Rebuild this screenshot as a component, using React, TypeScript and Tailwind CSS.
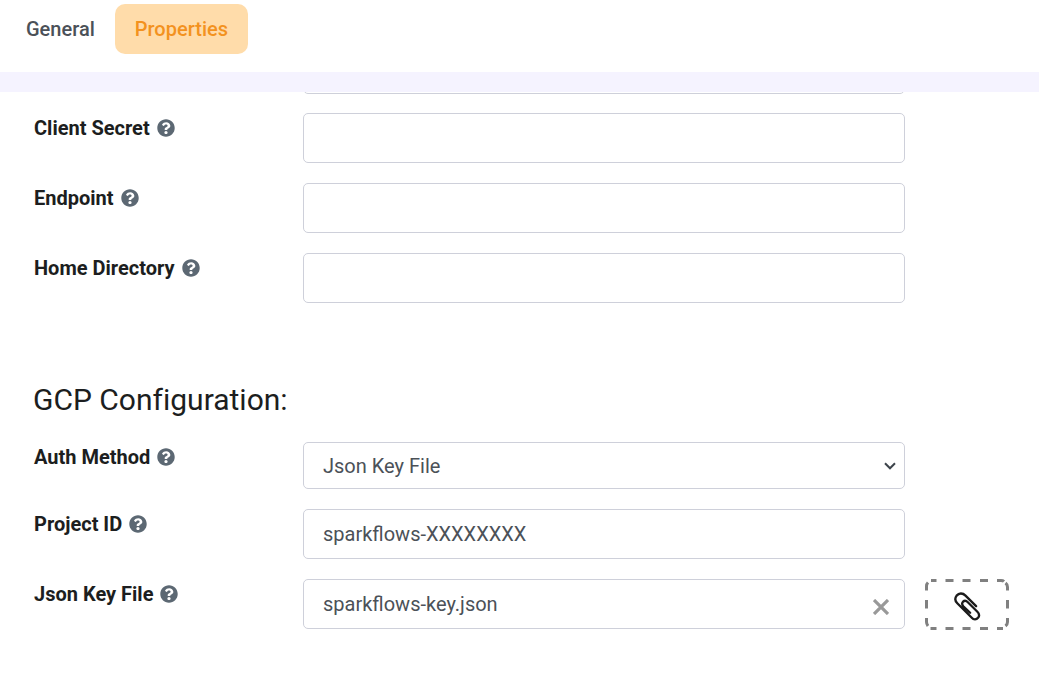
import { useId, useState } from "react";
import type { ReactNode } from "react";
import { FaQuestionCircle } from "react-icons/fa";

const fieldBox =
  "block w-full rounded-[5px] border border-[#ced0da] bg-white text-xl text-[#4b5158] outline-none focus:border-[#f7941d]";

function Row({ id, label, action, children }: { id: string; label: string; action?: ReactNode; children: ReactNode }) {
  return (
    <div className="grid grid-cols-[250px_minmax(0,1fr)_84px] items-start gap-5">
      <div className="flex items-center gap-[7px] pl-px leading-[30px]">
        <label htmlFor={id} className="text-xl leading-[30px] font-bold text-[#1c1e20]">
          {label}
        </label>
        <FaQuestionCircle className="size-[18px] text-[#5c6873]" aria-hidden="true" />
      </div>
      <div className="relative">{children}</div>
      {action}
    </div>
  );
}

function TextRow({ label, initial = "" }: { label: string; initial?: string }) {
  const id = useId();
  const [value, setValue] = useState(initial);
  return (
    <Row id={id} label={label}>
      <input id={id} type="text" value={value} onChange={(e) => setValue(e.target.value)} className={`${fieldBox} h-[50px] px-[19px]`} />
    </Row>
  );
}

function SelectRow() {
  const id = useId();
  return (
    <Row id={id} label="Auth Method">
      <select id={id} className={`${fieldBox} h-[47px] appearance-none px-[19px]`}>
        <option>Json Key File</option>
      </select>
      <svg viewBox="0 0 12 8" className="pointer-events-none absolute top-5 right-[9px] h-2 w-3" fill="none" stroke="#3d444b" strokeWidth="2" aria-hidden="true">
        <path d="M1 1.2 6 6.3 11 1.2" />
      </svg>
    </Row>
  );
}

function FileRow() {
  const id = useId();
  const [value, setValue] = useState("sparkflows-key.json");
  return (
    <Row
      id={id}
      label="Json Key File"
      action={
        <button type="button" aria-label="Attach file" className="relative flex h-[51px] w-full items-center justify-center">
          <svg className="absolute inset-0 size-full" viewBox="0 0 84 51" fill="none" stroke="#808080" strokeWidth="3" aria-hidden="true">
            <path d="M20.5 1.5H28.5M37.5 1.5H45.5M55 1.5H63M20.5 49.5H28.5M37.5 49.5H45.5M55 49.5H63M1.5 21V29.5M82.5 21V29.5" />
            <path d="M1.5 11.5V7Q1.5 5 3 3.5M6 1.5H11.5M72 1.5H76Q78 1.5 79 2.5M80.5 4Q82.5 5.5 82.5 8V11.5M1.5 39V43Q1.5 45 3 47M5.5 49.5H11.5M72 49.5H78M80.5 47Q82.5 45.5 82.5 43V39" />
          </svg>
          <svg viewBox="312 64 80 88" className="relative top-0.5 h-[29px] w-[27px]" fill="none" stroke="#1b1b1b" strokeWidth="7" strokeLinecap="round" strokeLinejoin="round" aria-hidden="true">
            <path d="M378 107 346 75C337 66 326 67 319 75C313 83 315 92 321 98L365 142C371 149 379 148 384 142C389 136 387 129 382 124L353 95C348 90 342 90 338 94C334 99 336 104 340 108L360 127" />
          </svg>
        </button>
      }
    >
      <input id={id} type="text" value={value} onChange={(e) => setValue(e.target.value)} className={`${fieldBox} h-[50px] pr-12 pl-[19px]`} />
      <button type="button" aria-label="Clear file" onClick={() => setValue("")} className="absolute top-5 right-4 size-4">
        <svg viewBox="0 0 16 16" fill="none" stroke="#999999" strokeWidth="3.2" aria-hidden="true">
          <path d="m1 1 14 14M15 1 1 15" />
        </svg>
      </button>
    </Row>
  );
}

export default function App() {
  return (
    <div className="min-h-screen bg-white font-[Roboto,sans-serif]">
      <nav className="flex items-start border-b-[20px] border-[#f5f3ff] px-1.5 pt-1 pb-[18px] text-xl font-medium">
        <button type="button" className="h-[50px] rounded-[10px] px-5 text-[#4b5158]">
          General
        </button>
        <button type="button" className="h-[50px] rounded-[10px] bg-[#ffdcaa] px-5 text-[#f3921f]">
          Properties
        </button>
      </nav>
      <main className="pr-[30px] pl-[33px]">
        <div className="flex h-0.5 items-end overflow-hidden pr-[104px] pl-[270px]">
          <input type="text" aria-label="Client ID" className={`${fieldBox} h-[50px] shrink-0 px-[19px]`} />
        </div>
        <section className="flex flex-col gap-5 pt-[19px]">
          <TextRow label="Client Secret" />
          <TextRow label="Endpoint" />
          <TextRow label="Home Directory" />
        </section>
        <section className="flex flex-col gap-5 pt-[75px] pb-10">
          <h2 className="text-[30px] leading-[44px] font-normal text-[#1c1e20] [font-variant-ligatures:none]">GCP Configuration:</h2>
          <SelectRow />
          <TextRow label="Project ID" initial="sparkflows-XXXXXXXX" />
          <FileRow />
        </section>
      </main>
    </div>
  );
}
